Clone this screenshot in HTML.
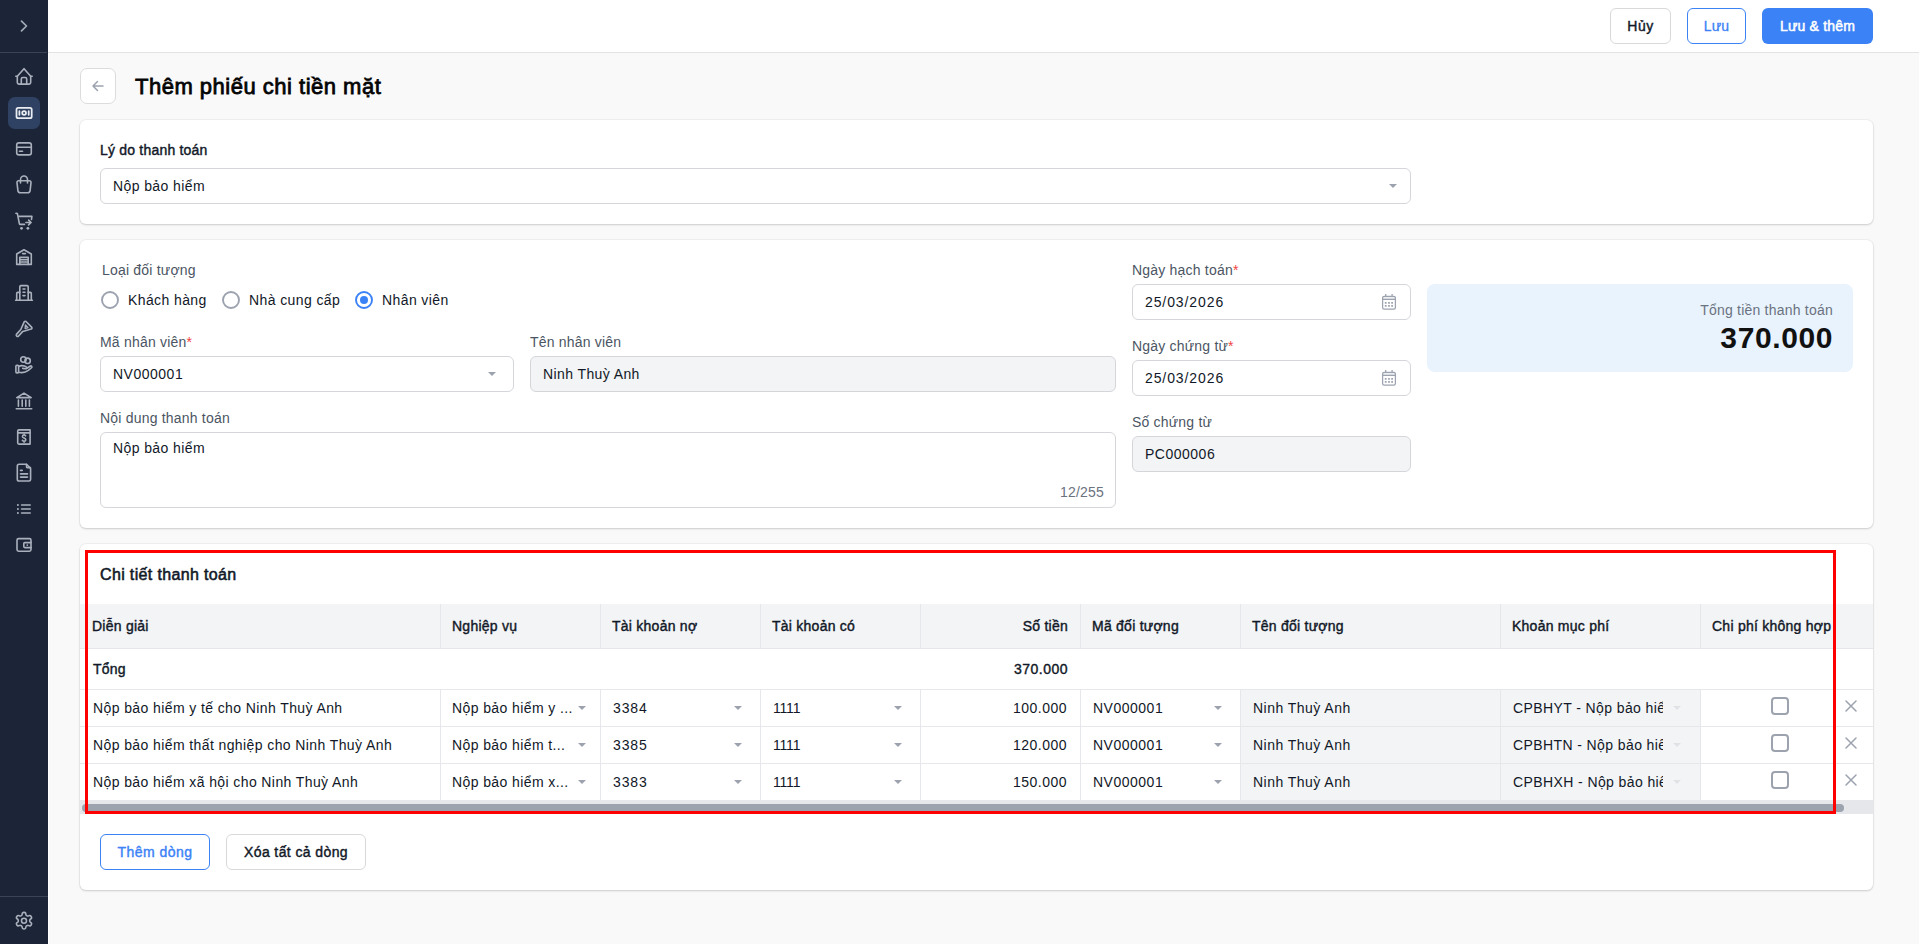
<!DOCTYPE html>
<html><head><meta charset="utf-8">
<style>
*{box-sizing:border-box;margin:0;padding:0}
html,body{width:1919px;height:944px;overflow:hidden}
body{font-family:"Liberation Sans",sans-serif;background:#f9f9f9;color:#111827;position:relative;font-size:14px;letter-spacing:0.4px}
.abs{position:absolute}
.b{-webkit-text-stroke:0.4px currentColor;letter-spacing:0.25px}
.num{letter-spacing:0.5px}
#side{left:0;top:0;width:48px;height:944px;background:#1c2537}
#side .div1{left:0;top:52px;width:47px;height:1px;background:#3a4456}
#side .div2{left:0;top:896px;width:48px;height:1px;background:#3a4456}
#active{left:8px;top:97px;width:32px;height:32px;border-radius:7px;background:#2f4263}
#topbar{left:48px;top:0;width:1871px;height:53px;background:#fff;border-bottom:1px solid #e3e3e3}
.btn{position:absolute;height:36px;border-radius:6px;font-size:14px;display:flex;align-items:center;justify-content:center;line-height:16px}
.card{position:absolute;background:#fff;border-radius:6px;box-shadow:0 0 0 1px rgba(0,0,0,.035),0 1px 2px rgba(0,0,0,.10),0 1px 3px rgba(0,0,0,.06)}
.lbl{position:absolute;font-size:14px;color:#4b5563;white-space:nowrap;line-height:16px;letter-spacing:0.2px}
.inp{position:absolute;height:36px;border:1px solid #d4d6da;border-radius:6px;background:#fff;font-size:14px;color:#111827;padding-left:12px;display:flex;align-items:center;white-space:nowrap;line-height:16px}
.inp.dis{background:#f3f4f6}
.caret{position:absolute;width:0;height:0;border-left:4px solid transparent;border-right:4px solid transparent;border-top:4px solid #9ca3af}
.req{color:#ef4444}
.radio{position:absolute;width:17px;height:17px;border-radius:50%;border:1.5px solid #9ca3af;background:#fff}
.radio.on{border-color:#3b82f6}
.radio.on::after{content:"";position:absolute;left:3px;top:3px;width:8px;height:8px;border-radius:50%;background:#3b82f6}
.rtxt{position:absolute;font-size:14px;color:#111827;white-space:nowrap;line-height:16px}
.th{position:absolute;top:604px;height:45px;background:#f3f4f6;border-bottom:1px solid #e5e7eb}
.vl{position:absolute;width:1px;background:#e5e7eb}
.hl{position:absolute;height:1px;background:#e5e7eb}
.td{position:absolute;font-size:14px;color:#111827;white-space:nowrap;line-height:16px}
.gcell{position:absolute;background:#f3f4f6}
.cb{position:absolute;width:17.5px;height:17.5px;border:2px solid #9ca3af;border-radius:4px;background:#fff}
.xic{position:absolute;width:12px;height:12px}
</style></head><body>

<div id="side" class="abs">
<svg class="abs" style="left:17px;top:19px" width="14" height="14" viewBox="0 0 14 14"><path d="M4.5 2.2l5 4.8-5 4.8" fill="none" stroke="#a3abb8" stroke-width="1.7" stroke-linecap="round" stroke-linejoin="round"/></svg>
<div class="div1 abs"></div><div id="active" class="abs"></div><div class="div2 abs"></div>
<svg class="abs" style="left:0;top:0" width="48" height="944" viewBox="0 0 48 944">
<g fill="none" stroke="#aab1bd" stroke-width="1.6" stroke-linecap="round" stroke-linejoin="round">
<!-- home -->
<path d="M15.8 76.3H17.3L24 68.7L30.7 76.3H32.2"/>
<path d="M17.3 76.3V82.3A1.8 1.8 0 0 0 19.1 84.1H28.9A1.8 1.8 0 0 0 30.7 82.3V76.3"/>
<path d="M21.3 84.1V79A1.5 1.5 0 0 1 22.8 77.5H25.2A1.5 1.5 0 0 1 26.7 79V84.1"/>
<!-- card -->
<rect x="16.7" y="142.9" width="14.6" height="12" rx="2.2"/>
<path d="M16.7 147.3H31.3"/>
<path d="M19.5 151.3H22.5"/>
<!-- bag -->
<path d="M18.6 180.8H29.4A1.6 1.6 0 0 1 31 182.6L30.1 190.6A2.4 2.4 0 0 1 27.7 192.7H20.3A2.4 2.4 0 0 1 17.9 190.6L17 182.6A1.6 1.6 0 0 1 18.6 180.8Z"/>
<path d="M20.5 183V179.5A3.5 3.5 0 0 1 27.5 179.5V183"/>
<!-- cart -->
<path d="M16 213.3L17.4 213.6L19.4 223.8A0.8 0.8 0 0 0 20.2 224.4H24.5"/>
<path d="M18.9 216.4H31.9L31.5 219.5"/>
<path d="M25.9 222.5H31.1M28.6 220.1L31.1 222.5L28.6 224.9"/>
<!-- warehouse -->
<path d="M16.7 264.4V254L24 249.8L31.3 254V264.4Z"/>
<path d="M22.6 253.6H25.4"/>
<path d="M19.8 264.4V257.2H28.2V264.4M19.8 259.6H28.2M19.8 262H28.2"/>
<!-- building -->
<path d="M15.6 300.3H32.4"/>
<path d="M19.8 300.3V286.8A1.2 1.2 0 0 1 21 285.6H27A1.2 1.2 0 0 1 28.2 286.8V300.3"/>
<path d="M16.7 300.3V293.4A1 1 0 0 1 17.7 292.4H19.8M28.2 292.4H30.3A1 1 0 0 1 31.3 293.4V300.3"/>
<path d="M23 289H25M23 292.3H25M23 295.6H25"/>
<!-- key/cone -->
<path d="M24.3 321.6A1.4 1.4 0 0 1 26 321.5L31.6 327.1A1.2 1.2 0 0 1 31.1 329.1L22.8 331.4L18.4 336.2A1.4 1.4 0 0 1 16.4 334.4L20.8 329.5Z"/>
<path d="M25.4 325L28 327.6L25.1 328.6Z" stroke-width="1.3"/>
<!-- coins hand -->
<circle cx="23.4" cy="359.5" r="2.7"/>
<circle cx="27.6" cy="360.8" r="2.7"/>
<rect x="15.9" y="365.3" width="2.7" height="7.6" rx="1"/>
<path d="M18.6 366.6C20.3 365.5 22.5 365.4 24.3 366.1L26 366.8A1 1 0 0 1 25.3 368.7L22.7 368.4M18.6 372.2C22 373 25.4 372.6 28.3 370.4L31.8 367.5A1.1 1.1 0 0 0 30.4 366L26.9 368.2"/>
<!-- bank -->
<path d="M16.3 408.8H31.7"/>
<path d="M16.8 397.6H31.2L24 393.1Z"/>
<path d="M18.4 400V406.3M22.2 400V406.3M25.8 400V406.3M29.4 400V406.3"/>
<!-- book $ -->
<path d="M19 429.9H30.1V444.1H19A1.3 1.3 0 0 1 17.7 442.8V431.2A1.3 1.3 0 0 1 19 429.9Z"/>
<path d="M17.9 432.9H30.1"/>
<path d="M25.6 435.8C25.2 435.2 24.6 435 24 435C23.1 435 22.4 435.6 22.4 436.5C22.4 438.5 25.8 437.6 25.8 439.7C25.8 440.6 25 441.2 24.1 441.2C23.4 441.2 22.8 440.9 22.4 440.3M24.1 434V435M24.1 441.2V442.3"/>
<!-- file -->
<path d="M26.5 464.3V466.8A0.8 0.8 0 0 0 27.3 467.6H30.4"/>
<path d="M28.9 481H19.1A1.8 1.8 0 0 1 17.3 479.2V466.1A1.8 1.8 0 0 1 19.1 464.3H26.5L30.6 468.4V479.2A1.8 1.8 0 0 1 28.9 481Z"/>
<path d="M20.5 470.4H22.2M20.5 473.9H27.5M20.5 477.1H27.5"/>
<!-- list -->
<path d="M21.6 505H30.2M21.6 509H30.2M21.6 513H30.2"/>
<path d="M17.9 505V505.05M17.9 509V509.05M17.9 513V513.05" stroke-width="2"/>
<!-- wallet -->
<path d="M18.6 538.6H29.4A1.6 1.6 0 0 1 31 540.2V549.6A1.6 1.6 0 0 1 29.4 551.2H18.6A1.6 1.6 0 0 1 17 549.6V540.2A1.6 1.6 0 0 1 18.6 538.6Z"/>
<path d="M31 542.6H24.8A1 1 0 0 0 23.8 543.6V546.6A1 1 0 0 0 24.8 547.6H31"/>
<!-- gear -->
<g transform="translate(14 910.7) scale(0.8333)" stroke-width="1.9"><path d="M12.22 2h-.44a2 2 0 0 0-2 2v.18a2 2 0 0 1-1 1.73l-.43.25a2 2 0 0 1-2 0l-.15-.08a2 2 0 0 0-2.73.73l-.22.38a2 2 0 0 0 .73 2.73l.15.1a2 2 0 0 1 1 1.72v.51a2 2 0 0 1-1 1.74l-.15.09a2 2 0 0 0-.73 2.73l.22.38a2 2 0 0 0 2.73.73l.15-.08a2 2 0 0 1 2 0l.43.25a2 2 0 0 1 1 1.73V20a2 2 0 0 0 2 2h.44a2 2 0 0 0 2-2v-.18a2 2 0 0 1 1-1.730l.43-.25a2 2 0 0 1 2 0l.15.08a2 2 0 0 0 2.730-.73l.22-.39a2 2 0 0 0-.73-2.73l-.15-.08a2 2 0 0 1-1-1.74v-.5a2 2 0 0 1 1-1.74l.15-.09a2 2 0 0 0 .73-2.73l-.22-.38a2 2 0 0 0-2.73-.73l-.15.08a2 2 0 0 1-2 0l-.43-.25a2 2 0 0 1-1-1.73V4a2 2 0 0 0-2-2z"/><circle cx="12" cy="12" r="3"/></g>
</g>
<g fill="#aab1bd"><circle cx="21.5" cy="228.3" r="1.4"/><circle cx="27.9" cy="228.3" r="1.4"/><circle cx="27.3" cy="545.1" r="0.9"/></g>
<!-- active money -->
<g fill="none" stroke="#e9ecf1" stroke-width="1.75" stroke-linecap="round" stroke-linejoin="round">
<rect x="16.5" y="107.8" width="15.2" height="10.4" rx="1.7"/>
<circle cx="24.1" cy="113" r="1.9"/>
<path d="M19.4 111.2V114.8M28.7 111.2V114.8"/>
</g>
</svg>

</div>

<div id="topbar" class="abs"></div>
<div class="abs" style="left:48px;top:53px;width:1px;height:891px;background:#fff"></div>
<div class="btn b" style="left:1610px;top:8px;width:61px;border:1px solid #d9d9d9;background:#fff;color:#111827;letter-spacing:0.5px">Hủy</div>
<div class="btn" style="left:1687px;top:8px;width:59px;border:1px solid #3b82f6;background:#fff;color:#3b82f6;-webkit-text-stroke:0.3px currentColor;letter-spacing:0.2px">Lưu</div>
<div class="btn b" style="left:1762px;top:8px;width:111px;background:#3b82f6;color:#fff;-webkit-text-stroke:0.5px currentColor;letter-spacing:0.2px">Lưu &amp; thêm</div>

<div class="abs" style="left:80px;top:68px;width:36px;height:36px;border:1px solid #dcdcdc;border-radius:7px;background:#fff"></div>
<svg class="abs" style="left:90px;top:78px" width="16" height="16" viewBox="0 0 16 16"><path d="M13 8H3M7.5 3.5L3 8l4.5 4.5" fill="none" stroke="#9ca3af" stroke-width="1.5" stroke-linecap="round" stroke-linejoin="round"/></svg>
<div class="abs b" style="left:135px;top:73.5px;font-size:22px;line-height:26px;white-space:nowrap;letter-spacing:0.5px;-webkit-text-stroke:0.8px currentColor;color:#050505">Thêm phiếu chi tiền mặt</div>

<div class="card" style="left:80px;top:120px;width:1793px;height:104px"></div>
<div class="lbl b" style="left:100px;top:142px;color:#111827">Lý do thanh toán</div>
<div class="inp" style="left:100px;top:168px;width:1311px">Nộp bảo hiểm</div>
<div class="caret" style="left:1389px;top:184px"></div>

<div class="card" style="left:80px;top:240px;width:1793px;height:288px"></div>
<div class="lbl" style="left:102px;top:262px">Loại đối tượng</div>
<svg class="abs" style="left:101px;top:291px" width="18" height="18" viewBox="0 0 18 18"><circle cx="9" cy="9" r="8" fill="#fff" stroke="#9ca3af" stroke-width="1.9"/></svg>
<div class="rtxt" style="left:128px;top:292px">Khách hàng</div>
<svg class="abs" style="left:222px;top:291px" width="18" height="18" viewBox="0 0 18 18"><circle cx="9" cy="9" r="8" fill="#fff" stroke="#9ca3af" stroke-width="1.9"/></svg>
<div class="rtxt" style="left:249px;top:292px">Nhà cung cấp</div>
<svg class="abs" style="left:355px;top:291px" width="18" height="18" viewBox="0 0 18 18"><circle cx="9" cy="9" r="8" fill="#fff" stroke="#3b82f6" stroke-width="1.9"/><circle cx="9" cy="9" r="4" fill="#3b82f6"/></svg>
<div class="rtxt" style="left:382px;top:292px">Nhân viên</div>
<div class="lbl" style="left:100px;top:334px">Mã nhân viên<span class="req">*</span></div>
<div class="inp num" style="left:100px;top:356px;width:414px">NV000001</div>
<div class="caret" style="left:488px;top:372px"></div>
<div class="lbl" style="left:530px;top:334px">Tên nhân viên</div>
<div class="inp dis" style="left:530px;top:356px;width:586px">Ninh Thuỳ Anh</div>
<div class="lbl" style="left:100px;top:410px">Nội dung thanh toán</div>
<div class="inp" style="left:100px;top:432px;width:1016px;height:76px;align-items:flex-start;padding-top:7px">Nộp bảo hiểm</div>
<div class="lbl num" style="left:1030px;top:484px;width:74px;text-align:right;color:#6b7280">12/255</div>
<div class="lbl" style="left:1132px;top:262px">Ngày hạch toán<span class="req">*</span></div>
<div class="inp num" style="left:1132px;top:284px;width:279px;letter-spacing:0.9px">25/03/2026</div>
<div class="lbl" style="left:1132px;top:338px">Ngày chứng từ<span class="req">*</span></div>
<div class="inp num" style="left:1132px;top:360px;width:279px;letter-spacing:0.9px">25/03/2026</div>
<div class="lbl" style="left:1132px;top:414px">Số chứng từ</div>
<div class="inp dis num" style="left:1132px;top:436px;width:279px">PC000006</div>
<svg class="abs" style="left:1376px;top:290px" width="24" height="24" viewBox="0 0 24 24"><rect x="6.6" y="6.4" width="12.8" height="3" fill="#eceef1"/><g fill="none" stroke="#9ca3af" stroke-width="1.25"><rect x="6.6" y="6.4" width="12.8" height="12.8" rx="1.6"/><path d="M6.6 9.4h12.8M9.7 3.9v2.5M16.1 3.9v2.5"/></g><g fill="#9ca3af"><rect x="8.8" y="11.9" width="1.8" height="1.8" rx=".3"/><rect x="12.1" y="11.9" width="1.8" height="1.8" rx=".3"/><rect x="15.2" y="11.9" width="1.8" height="1.8" rx=".3"/><rect x="8.8" y="15" width="1.8" height="1.8" rx=".3"/><rect x="12.1" y="15" width="1.8" height="1.8" rx=".3"/><rect x="15.2" y="15" width="1.8" height="1.8" rx=".3"/></g></svg>
<svg class="abs" style="left:1376px;top:366px" width="24" height="24" viewBox="0 0 24 24"><rect x="6.6" y="6.4" width="12.8" height="3" fill="#eceef1"/><g fill="none" stroke="#9ca3af" stroke-width="1.25"><rect x="6.6" y="6.4" width="12.8" height="12.8" rx="1.6"/><path d="M6.6 9.4h12.8M9.7 3.9v2.5M16.1 3.9v2.5"/></g><g fill="#9ca3af"><rect x="8.8" y="11.9" width="1.8" height="1.8" rx=".3"/><rect x="12.1" y="11.9" width="1.8" height="1.8" rx=".3"/><rect x="15.2" y="11.9" width="1.8" height="1.8" rx=".3"/><rect x="8.8" y="15" width="1.8" height="1.8" rx=".3"/><rect x="12.1" y="15" width="1.8" height="1.8" rx=".3"/><rect x="15.2" y="15" width="1.8" height="1.8" rx=".3"/></g></svg>
<div class="abs" style="left:1427px;top:284px;width:426px;height:88px;border-radius:8px;background:#e8f3fe"></div>
<div class="abs" style="left:1500px;top:302px;width:333px;text-align:right;font-size:14px;color:#6b7280;line-height:16px;letter-spacing:0.22px">Tổng tiền thanh toán</div>
<div class="abs" style="left:1500px;top:322px;width:333px;text-align:right;font-size:30px;font-weight:bold;color:#111;line-height:32px;letter-spacing:0.6px">370.000</div>

<div class="card" style="left:80px;top:544px;width:1793px;height:346px"></div>
<div class="lbl b" style="left:100px;top:566px;font-size:16px;color:#111827;line-height:18px;letter-spacing:0.35px;-webkit-text-stroke:0.55px currentColor">Chi tiết thanh toán</div>
<div class="th" style="left:80px;width:1793px"></div>
<div class="vl" style="left:440px;top:604px;height:44px"></div>
<div class="vl" style="left:600px;top:604px;height:44px"></div>
<div class="vl" style="left:760px;top:604px;height:44px"></div>
<div class="vl" style="left:920px;top:604px;height:44px"></div>
<div class="vl" style="left:1080px;top:604px;height:44px"></div>
<div class="vl" style="left:1240px;top:604px;height:44px"></div>
<div class="vl" style="left:1500px;top:604px;height:44px"></div>
<div class="vl" style="left:1700px;top:604px;height:44px"></div>
<div class="gcell" style="left:1241px;top:690px;width:459px;height:36px"></div>
<div class="gcell" style="left:1241px;top:727px;width:459px;height:36px"></div>
<div class="gcell" style="left:1241px;top:764px;width:459px;height:36px"></div>
<div class="hl" style="left:80px;top:689px;width:1793px"></div>
<div class="hl" style="left:80px;top:726px;width:1793px"></div>
<div class="hl" style="left:80px;top:763px;width:1793px"></div>
<div class="vl" style="left:440px;top:690px;height:110px"></div>
<div class="vl" style="left:600px;top:690px;height:110px"></div>
<div class="vl" style="left:760px;top:690px;height:110px"></div>
<div class="vl" style="left:920px;top:690px;height:110px"></div>
<div class="vl" style="left:1080px;top:690px;height:110px"></div>
<div class="vl" style="left:1240px;top:690px;height:110px"></div>
<div class="vl" style="left:1500px;top:690px;height:110px"></div>
<div class="vl" style="left:1700px;top:690px;height:110px"></div>
<div class="td b" style="left:92px;top:618px">Diễn giải</div>
<div class="td b" style="left:452px;top:618px">Nghiệp vụ</div>
<div class="td b" style="left:612px;top:618px">Tài khoản nợ</div>
<div class="td b" style="left:772px;top:618px">Tài khoản có</div>
<div class="td b" style="left:1092px;top:618px">Mã đối tượng</div>
<div class="td b" style="left:1252px;top:618px">Tên đối tượng</div>
<div class="td b" style="left:1512px;top:618px">Khoản mục phí</div>
<div class="td b" style="left:960px;top:618px;width:108px;text-align:right">Số tiền</div>
<div class="td b" style="left:1712px;top:618px;width:120px;overflow:hidden">Chi phí không hợp lệ</div>
<div class="td b" style="left:93px;top:661px">Tổng</div>
<div class="td b" style="left:960px;top:661px;width:108px;text-align:right;letter-spacing:0.5px">370.000</div>
<div class="td" style="left:93px;top:700px">Nộp bảo hiểm y tế cho Ninh Thuỳ Anh</div>
<div class="td" style="left:452px;top:700px">Nộp bảo hiểm y ...</div>
<div class="caret" style="left:578px;top:706px"></div>
<div class="td" style="left:613px;top:700px;letter-spacing:0.9px">3384</div>
<div class="caret" style="left:734px;top:706px"></div>
<div class="td" style="left:773px;top:700px;letter-spacing:-0.2px">1111</div>
<div class="caret" style="left:894px;top:706px"></div>
<div class="td" style="left:960px;top:700px;width:107px;text-align:right;letter-spacing:0.47px">100.000</div>
<div class="td num" style="left:1093px;top:700px">NV000001</div>
<div class="caret" style="left:1214px;top:706px"></div>
<div class="td" style="left:1253px;top:700px;letter-spacing:0.47px">Ninh Thuỳ Anh</div>
<div class="td" style="left:1513px;top:700px;width:150px;overflow:hidden">CPBHYT - Nộp bảo hiểm y tế</div>
<div class="caret" style="left:1673px;top:706px;border-top-color:#e0e2e6"></div>
<div class="cb" style="left:1771px;top:697px"></div>
<svg class="xic" style="left:1845px;top:700px" viewBox="0 0 12 12"><path d="M1 1L11 11M11 1L1 11" stroke="#9ca3af" stroke-width="1.5" stroke-linecap="round"/></svg>
<div class="td" style="left:93px;top:737px">Nộp bảo hiểm thất nghiệp cho Ninh Thuỳ Anh</div>
<div class="td" style="left:452px;top:737px">Nộp bảo hiểm t...</div>
<div class="caret" style="left:578px;top:743px"></div>
<div class="td" style="left:613px;top:737px;letter-spacing:0.9px">3385</div>
<div class="caret" style="left:734px;top:743px"></div>
<div class="td" style="left:773px;top:737px;letter-spacing:-0.2px">1111</div>
<div class="caret" style="left:894px;top:743px"></div>
<div class="td" style="left:960px;top:737px;width:107px;text-align:right;letter-spacing:0.47px">120.000</div>
<div class="td num" style="left:1093px;top:737px">NV000001</div>
<div class="caret" style="left:1214px;top:743px"></div>
<div class="td" style="left:1253px;top:737px;letter-spacing:0.47px">Ninh Thuỳ Anh</div>
<div class="td" style="left:1513px;top:737px;width:150px;overflow:hidden">CPBHTN - Nộp bảo hiểm</div>
<div class="caret" style="left:1673px;top:743px;border-top-color:#e0e2e6"></div>
<div class="cb" style="left:1771px;top:734px"></div>
<svg class="xic" style="left:1845px;top:737px" viewBox="0 0 12 12"><path d="M1 1L11 11M11 1L1 11" stroke="#9ca3af" stroke-width="1.5" stroke-linecap="round"/></svg>
<div class="td" style="left:93px;top:774px">Nộp bảo hiểm xã hội cho Ninh Thuỳ Anh</div>
<div class="td" style="left:452px;top:774px">Nộp bảo hiểm x...</div>
<div class="caret" style="left:578px;top:780px"></div>
<div class="td" style="left:613px;top:774px;letter-spacing:0.9px">3383</div>
<div class="caret" style="left:734px;top:780px"></div>
<div class="td" style="left:773px;top:774px;letter-spacing:-0.2px">1111</div>
<div class="caret" style="left:894px;top:780px"></div>
<div class="td" style="left:960px;top:774px;width:107px;text-align:right;letter-spacing:0.47px">150.000</div>
<div class="td num" style="left:1093px;top:774px">NV000001</div>
<div class="caret" style="left:1214px;top:780px"></div>
<div class="td" style="left:1253px;top:774px;letter-spacing:0.47px">Ninh Thuỳ Anh</div>
<div class="td" style="left:1513px;top:774px;width:150px;overflow:hidden">CPBHXH - Nộp bảo hiểm</div>
<div class="caret" style="left:1673px;top:780px;border-top-color:#e0e2e6"></div>
<div class="cb" style="left:1771px;top:771px"></div>
<svg class="xic" style="left:1845px;top:774px" viewBox="0 0 12 12"><path d="M1 1L11 11M11 1L1 11" stroke="#9ca3af" stroke-width="1.5" stroke-linecap="round"/></svg>
<div class="abs" style="left:80px;top:800px;width:1793px;height:14px;background:#e5e7eb"></div>
<div class="abs" style="left:82px;top:804px;width:1762px;height:8px;border-radius:4px;background:#9ca3af"></div>
<div class="abs" style="left:85px;top:550px;width:1751px;height:264px;border:3px solid #ff0000"></div>
<div class="btn b" style="left:100px;top:834px;width:110px;border:1px solid #3b82f6;background:#fff;color:#3b82f6;letter-spacing:0.45px">Thêm dòng</div>
<div class="btn b" style="left:226px;top:834px;width:140px;border:1px solid #d9d9d9;background:#fff;color:#111827;letter-spacing:0.4px">Xóa tất cả dòng</div>

</body></html>
